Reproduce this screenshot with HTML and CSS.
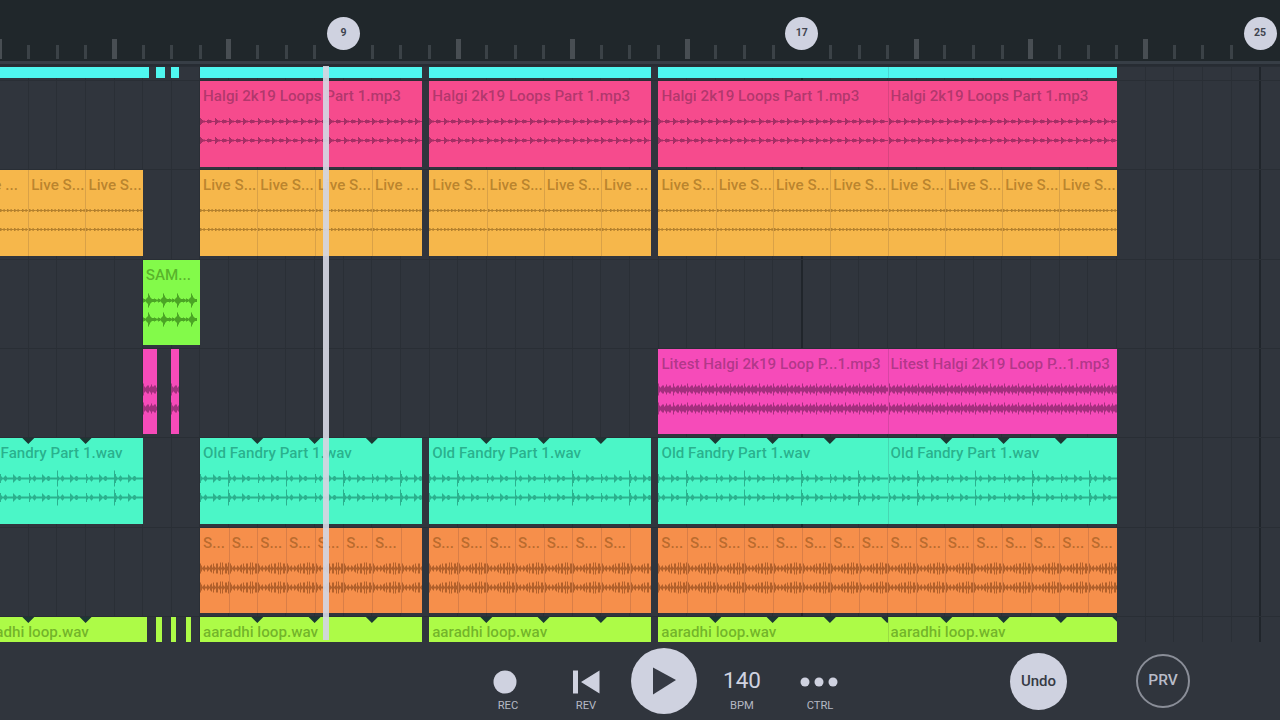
FILE: index.html
```html
<!DOCTYPE html>
<html lang="en">

<head>
    <meta charset="UTF-8">
    <meta name="viewport" content="width=device-width, initial-scale=1.0">
    <title>Playlist</title>
    <link rel="stylesheet" href="styles.css">
</head>

<body>
    <header class="ruler" id="ruler"></header>

    <main class="playlist">
        <div class="grid" id="grid"></div>
        <div class="tracks" id="tracks"></div>
        <div class="playhead"></div>
    </main>

    <footer class="toolbar">
        <div class="transport">
            <button class="control">
                <span class="icon"><svg class="rec" width="24" height="24"><circle cx="12" cy="12" r="11.5"/></svg></span>
                <span class="caption">REC</span>
            </button>
            <button class="control">
                <span class="icon"><svg width="28" height="24"><path d="M1 0.5h5v23h-5zM27.500 0.500v23L9 12z"/></svg></span>
                <span class="caption">REV</span>
            </button>
            <button class="play">
                <svg width="24" height="28"><path d="M0 0.500L23 13L0 27.500z"/></svg>
            </button>
            <button class="control">
                <span class="icon bpm">140</span>
                <span class="caption">BPM</span>
            </button>
            <button class="control">
                <span class="icon"><svg class="dots" width="38" height="24"><circle cx="5" cy="12" r="4.500"/><circle cx="19" cy="12" r="4.500"/><circle cx="33" cy="12" r="4.500"/></svg></span>
                <span class="caption">CTRL</span>
            </button>
        </div>
        <button class="round undo">Undo</button>
        <button class="round prv">PRV</button>
    </footer>

    <script src="playlist.js"></script>
</body>

</html>
```

FILE: styles.css
```css
* {
    box-sizing: border-box;
}

body {
    margin: 0;
    width: 1280px;
    height: 720px;
    overflow: hidden;
    display: flex;
    flex-direction: column;
    background-color: #30353d;
    font-family: Roboto, "Liberation Sans", sans-serif;
}

button {
    padding: 0;
    border: none;
    background: none;
    font: inherit;
    color: #cfd2e0;
}

svg {
    display: block;
}

/* Ruler */
.ruler {
    flex: none;
    height: 64px;
    display: flex;
    align-items: flex-end;
    padding-bottom: 2px;
    background-color: #20272b;
    border-bottom: 3px solid #373e46;
    overflow: hidden;
}

.tick {
    flex: none;
    width: 28.65px;
    height: 59px;
    display: flex;
    justify-content: center;
    align-items: flex-end;
}

.tick:first-child {
    margin-left: -14.5px;
}

.tick::before {
    content: "";
    width: 3px;
    height: 14px;
    background-color: #3b4247;
}

.tick.major::before {
    width: 5px;
    height: 20px;
    background-color: #484e53;
}

.tick.marker::before {
    display: none;
}

.badge {
    flex: none;
    width: 33px;
    height: 33px;
    margin-bottom: 9px;
    border-radius: 50%;
    background-color: #cfd2e0;
    color: #40444f;
    font-size: 10.5px;
    font-weight: 700;
    line-height: 32px;
    text-align: center;
}

/* Playlist */
.playlist {
    position: relative;
    flex: none;
    height: 578px;
    overflow: hidden;
    border-top: 2px solid #272c33;
}

.grid {
    position: absolute;
    inset: 0;
    display: flex;
    margin-left: -1px;
}

.cell {
    flex: none;
    width: 28.65px;
    border-left: 1px solid #2a2f36;
}

.cell.strong {
    border-left: 2px solid #20252b;
}

.tracks {
    position: relative;
    margin-left: -0.5px;
}

.track {
    display: flex;
    height: 89.33px;
    border-top: 1px solid #292e35;
}

.track.first {
    height: 14px;
}

.clip {
    position: relative;
    flex: none;
    height: 85.5px;
    overflow: hidden;
    white-space: nowrap;
}

.first .clip {
    height: 11px;
}

.clip.joined {
    border-left: 1px solid rgba(40, 30, 50, 0.14);
}

.name {
    display: block;
    padding: 5px 0 0 3px;
    font-size: 15.2px;
    font-weight: 500;
    line-height: 20px;
    color: rgba(50, 20, 50, 0.37);
}

/* the divider takes one pixel of the clip */
.joined .name {
    padding-left: 2px;
}

.wave {
    position: absolute;
    left: 0;
    top: 0;
    stroke: rgba(50, 10, 45, 0.42);
    fill: none;
}

.notches {
    position: absolute;
    left: 0;
    top: 0;
    fill: #1c3834;
}

.cyan .clip { background-color: #4ff7f0; }
.pink .clip { background-color: #f64b8d; }
.yellow .clip { background-color: #f6b74b; }
.green .clip { background-color: #83fa4a; }
.magenta .clip { background-color: #f64bb9; }
.teal .clip { background-color: #4bf6c7; }
.orange .clip { background-color: #f68f4b; }
.lime .clip { background-color: #adfb47; }

.yellow .name,
.orange .name { color: rgba(90, 50, 0, 0.4); }
.yellow .wave { stroke: rgba(80, 45, 0, 0.4); }
.orange .wave { stroke: rgba(80, 30, 0, 0.42); }
.green .name,
.lime .name { color: rgba(30, 80, 0, 0.42); }
.green .wave { stroke: rgba(20, 80, 0, 0.5); }
.teal .name { color: rgba(0, 90, 70, 0.45); }
.teal .wave { stroke: rgba(0, 80, 65, 0.42); }

.playhead {
    position: absolute;
    left: 322.5px;
    top: 0;
    width: 6px;
    height: 574px;
    background-color: rgba(211, 213, 225, 0.93);
}

/* Toolbar */
.toolbar {
    flex: 1;
    display: flex;
    align-items: flex-start;
    padding: 6px 0 0 469px;
}

.transport {
    display: flex;
    width: 390px;
}

.control {
    width: 78px;
    padding-top: 21px;
}

.icon {
    height: 24px;
    display: flex;
    justify-content: center;
    fill: #cfd2e0;
}

.rec {
    margin-right: 6px;
}

.dots {
    margin-right: 2px;
}

.bpm {
    font-size: 22.5px;
    line-height: 21px;
}

.caption {
    display: block;
    margin-top: 4px;
    font-size: 11.2px;
    line-height: 16px;
    color: #b4b8c3;
}

.play {
    width: 66px;
    height: 66px;
    margin: 0 6px;
    padding-left: 22px;
    border-radius: 50%;
    background-color: #cfd2e0;
    fill: #363a44;
}

.round {
    border-radius: 50%;
    font-weight: 500;
}

.undo {
    width: 57px;
    height: 57px;
    margin: 5px 0 0 151px;
    padding-bottom: 2px;
    background-color: #cfd2e0;
    color: #363a44;
    font-size: 15px;
}

.prv {
    width: 54px;
    height: 54px;
    margin: 6px 0 0 69px;
    padding-bottom: 2px;
    border: 2px solid #8a8e98;
    color: #b9bcc8;
    font-size: 15.5px;
}
```

FILE: playlist.js
```js
const STEP = 28.65; // half a bar
const SVG = "http://www.w3.org/2000/svg";

// start and length of each clip are in steps
function repeat(start, count, length, name) {
    const clips = [];
    for (let i = 0; i < count; i++) {
        clips.push([start + i * length, length, name]);
    }
    return clips;
}

const tracks = [
    {
        color: "cyan first",
        clips: [[0, 5.23, ""], [5.48, 0.29, ""], [5.97, 0.28, ""], [7, 7.75, ""], [15, 7.75, ""], [23, 8, ""], [31, 8, ""]]
    },
    {
        color: "pink",
        clips: [7, 15].map(s => [s, 7.75, "Halgi 2k19 Loops Part 1.mp3"]).concat(repeat(23, 2, 8, "Halgi 2k19 Loops Part 1.mp3"))
    },
    {
        color: "yellow",
        clips: [
            [-1, 2, "Live ..."], ...repeat(1, 2, 2, "Live S..."),
            ...repeat(7, 3, 2, "Live S..."), [13, 1.75, "Live ..."],
            ...repeat(15, 3, 2, "Live S..."), [21, 1.75, "Live ..."],
            ...repeat(23, 8, 2, "Live S...")
        ]
    },
    { color: "green", clips: [[5, 2, "SAM..."]] },
    {
        color: "magenta",
        clips: [[5, 0.5, ""], [5.97, 0.28, ""], ...repeat(23, 2, 8, "Litest Halgi 2k19 Loop P...1.mp3")]
    },
    {
        color: "teal",
        notches: true,
        clips: [[-1, 6, "Old Fandry Part 1.wav"], [7, 7.75, "Old Fandry Part 1.wav"], [15, 7.75, "Old Fandry Part 1.wav"], ...repeat(23, 2, 8, "Old Fandry Part 1.wav")]
    },
    {
        color: "orange",
        clips: [
            ...repeat(7, 7, 1, "S..."), [14, 0.75, ""],
            ...repeat(15, 7, 1, "S..."), [22, 0.75, ""],
            ...repeat(23, 16, 1, "S...")
        ]
    },
    {
        color: "lime",
        notches: true,
        clips: [[-1, 6.16, "aaradhi loop.wav"], [5.48, 0.2, ""], [5.97, 0.2, ""], [6.5, 0.2, ""], [7, 7.75, "aaradhi loop.wav"], [15, 7.75, "aaradhi loop.wav"], ...repeat(23, 2, 8, "aaradhi loop.wav")]
    }
];

// Half height of the waveform at x pixels from the start of the clip
const shapes = {
    pink: x => [3.5, 2.5, 1.5, 1, 1, 0.5, 0.5, 1.5, 2, 1.5, 1.5, 1, 0.5, 0][Math.floor(x % 14.32)] || 0.5,
    yellow: x => [1.5, 1, 0.5, 1, 1.2, 0.5, 0.4][Math.floor(x % 7.16)] || 0.5,
    green: x => x > 53 ? 0 : [2, 1.5, 1, 2, 3, 7, 5, 3, 2, 1.5, 1.5, 2, 1.5, 1][Math.floor(x % 14.2)] || 1,
    magenta: x => [6, 3, 2, 3, 4, 4, 2, 3, 5, 3, 3, 4, 4, 2][Math.floor(x % 14.32)] || 2,
    teal: x => {
        const beat = x % 57.3;
        if (beat >= 28 && beat < 29) return 8;
        return [4.5, 2, 1, 1, 2, 3, 2, 1, 1, 1, 1, 1, 1, 4, 3, 2, 1, 1, 2, 2.5, 2, 1, 1, 1, 1, 1, 1, 1][Math.floor(x % STEP)] || 1;
    },
    orange: x => [5, 3, 1, 2, 3, 1, 1, 3, 2, 1, 3, 4, 1, 5, 2, 1, 5, 5, 1, 2, 6, 1, 6, 2, 1, 5, 5, 2, 6][Math.floor(x % STEP)] || 1
};

function makeSvg(className, width, path) {
    const svg = document.createElementNS(SVG, "svg");
    svg.setAttribute("class", className);
    svg.setAttribute("width", width);
    svg.setAttribute("height", 86);
    const shape = document.createElementNS(SVG, "path");
    shape.setAttribute("d", path);
    svg.appendChild(shape);
    return svg;
}

function wavePath(shape, width) {
    let path = "";
    for (const center of [40.5, 59.5]) {
        for (let x = 0; x < width; x++) {
            const half = shape(x);
            path += `M${x + 0.5} ${center - half}V${center + half}`;
        }
    }
    return path;
}

function notchPath(width) {
    let path = "";
    for (let x = 2 * STEP; x < width + 2; x += 2 * STEP) {
        path += `M${x - 6} 0H${x + 6}L${x} 6z`;
    }
    return path;
}

const ruler = document.getElementById("ruler");
const grid = document.getElementById("grid");
for (let i = 0; i < 46; i++) {
    const tick = document.createElement("div");
    tick.className = "tick";
    if (i % 16 === 12) {
        tick.classList.add("marker");
        tick.innerHTML = `<span class="badge">${i / 2 + 3}</span>`;
    } else if (i % 4 === 0) {
        tick.classList.add("major");
    }
    ruler.appendChild(tick);

    const cell = document.createElement("div");
    cell.className = i === 28 || i === 44 ? "cell strong" : "cell";
    grid.appendChild(cell);
}

for (const track of tracks) {
    const row = document.createElement("div");
    row.className = "track " + track.color;
    let end = 0;
    for (const [start, length, name] of track.clips) {
        const width = length * STEP;
        const clip = document.createElement("div");
        clip.className = "clip";
        clip.style.width = width + "px";
        clip.style.marginLeft = (start - end) * STEP + "px";
        if (start === end && start > 0) {
            clip.classList.add("joined");
        }
        if (name) {
            clip.innerHTML = `<span class="name">${name}</span>`;
        }
        if (shapes[track.color]) {
            clip.appendChild(makeSvg("wave", width, wavePath(shapes[track.color], width)));
        }
        if (track.notches && name) {
            // no notch at the end of a clip, except on the long lime loops
            const last = track.color === "lime" && length === 8 ? width : width - 8;
            clip.appendChild(makeSvg("notches", width, notchPath(last)));
        }
        row.appendChild(clip);
        end = start + length;
    }
    document.getElementById("tracks").appendChild(row);
}
```
